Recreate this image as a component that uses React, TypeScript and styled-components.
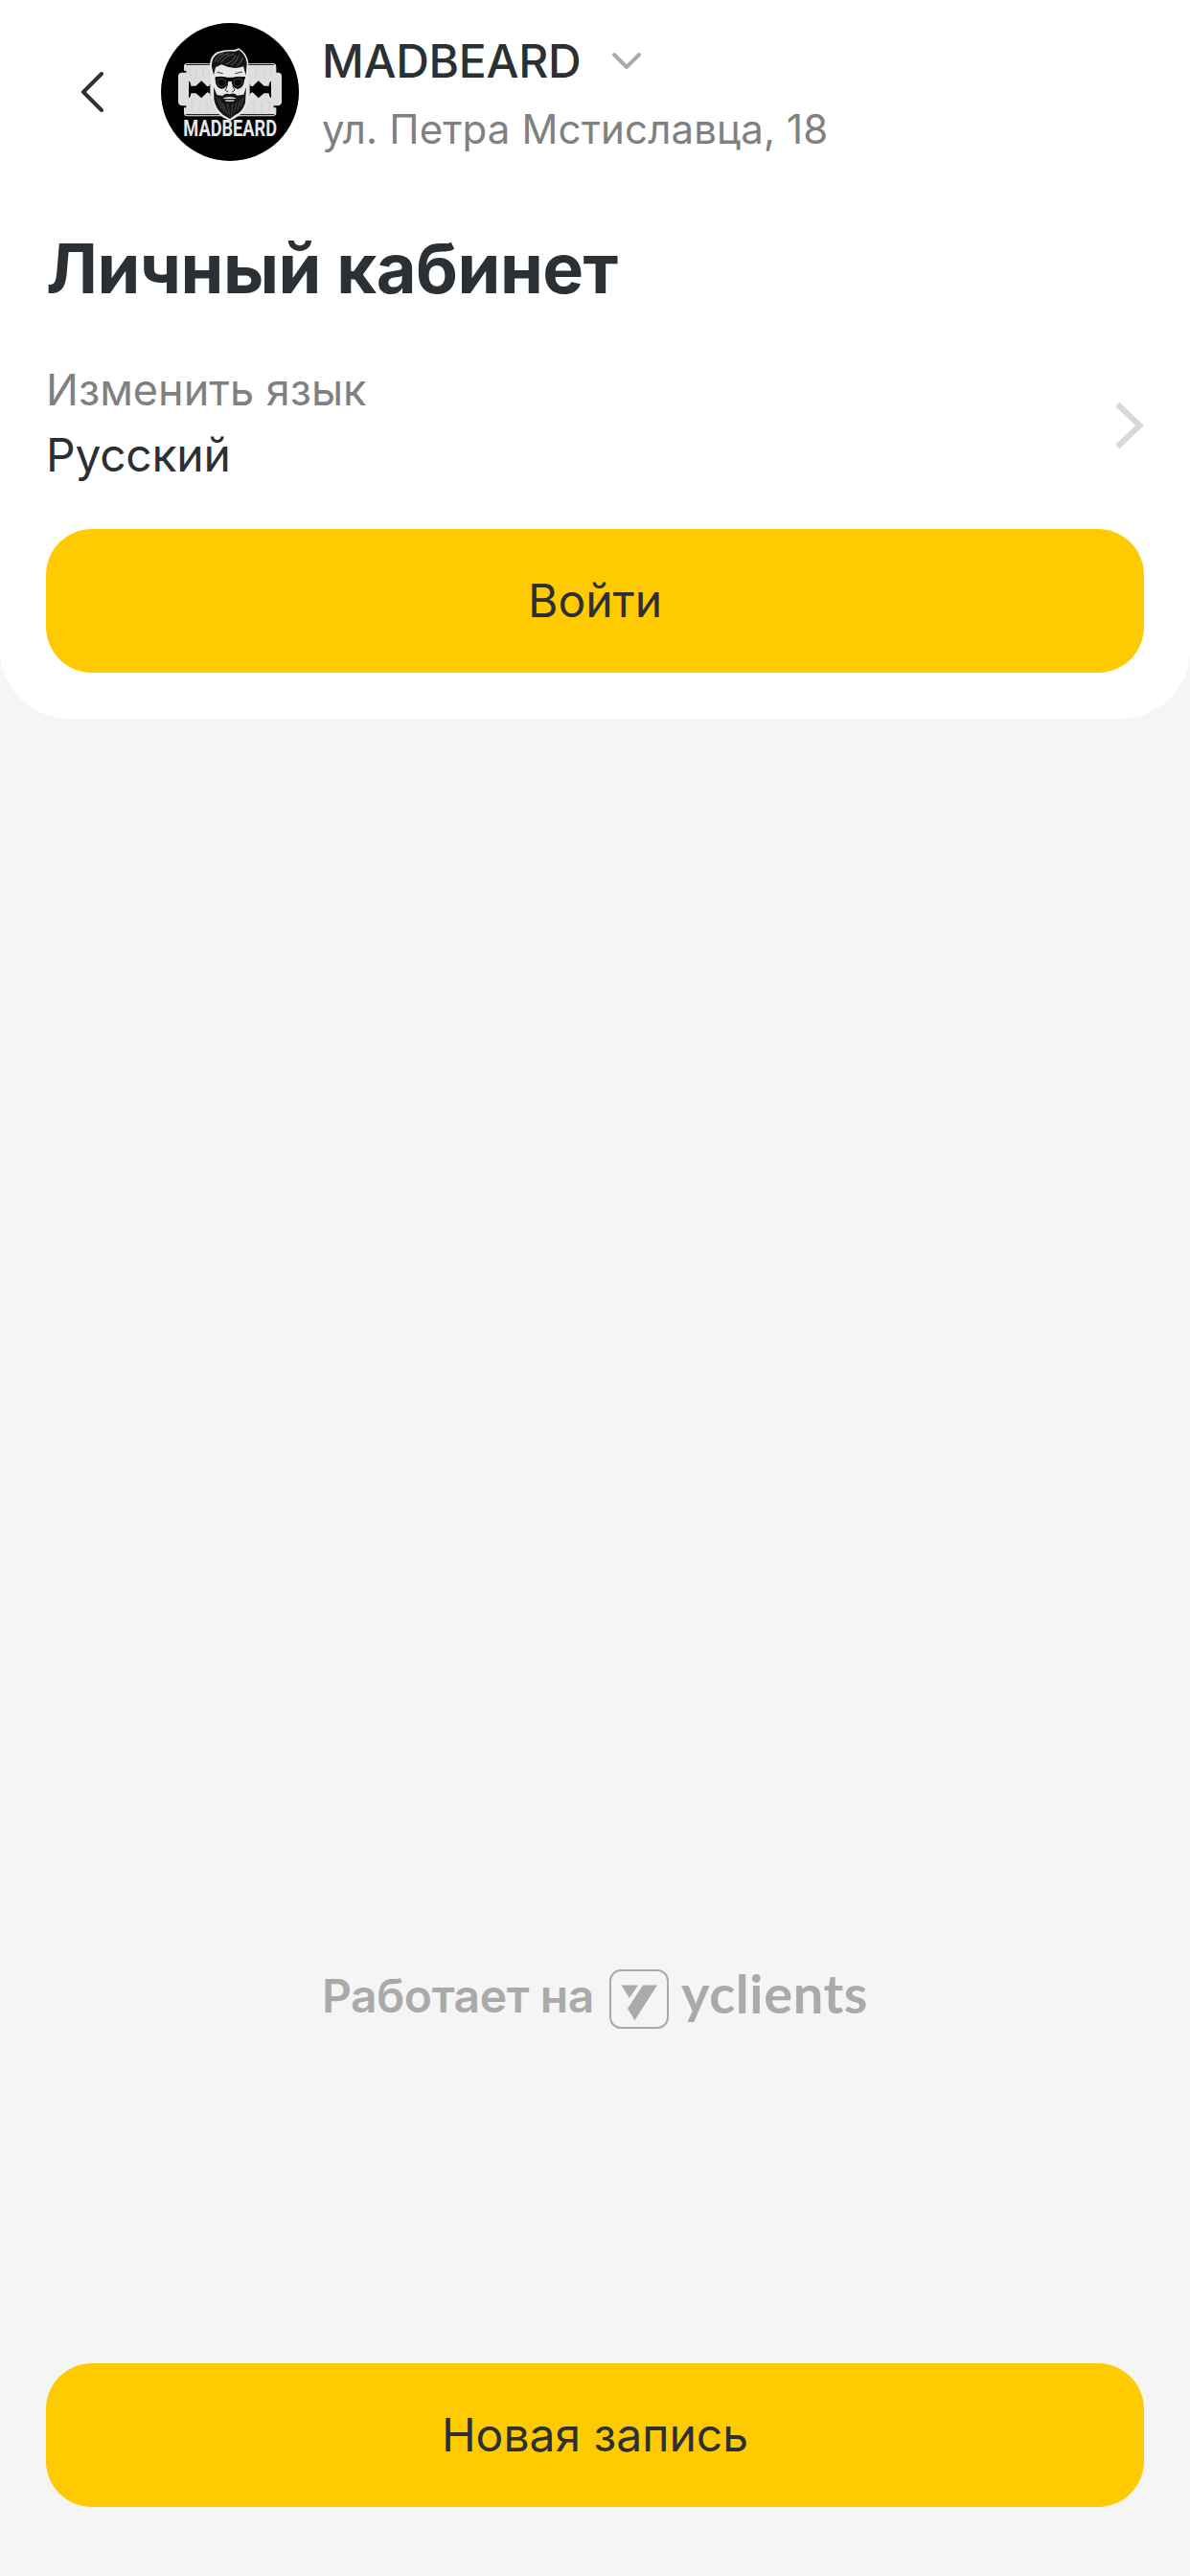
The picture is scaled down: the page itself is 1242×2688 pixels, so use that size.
import React from 'react';
import styled, { createGlobalStyle } from 'styled-components';

const GlobalStyle = createGlobalStyle`
  * {
    box-sizing: border-box;
  }

  body {
    margin: 0;
    background: #f5f5f5;
    color: #2b3034;
    font-family: Inter, 'Liberation Sans', sans-serif;
  }
`;

const Page = styled.div`
  display: flex;
  flex-direction: column;
  width: 100%;
  height: 2688px;
  background: #f5f5f5;
`;

const Card = styled.section`
  height: 750px;
  padding: 24px 48px 48px;
  border-radius: 0 0 72px 72px;
  background: #fff;
`;

const Header = styled.header`
  display: flex;
  align-items: center;
  height: 144px;
`;

const BackButton = styled.button`
  display: flex;
  align-items: center;
  justify-content: center;
  width: 96px;
  height: 96px;
  margin-right: 24px;
  padding: 0;
  border: 0;
  background: none;
`;

const Avatar = styled.svg`
  flex: none;
  width: 144px;
  height: 144px;
  overflow: visible;
`;

const Company = styled.div`
  display: flex;
  flex-direction: column;
  margin-left: 24px;
  padding-top: 7px;
`;

const CompanyName = styled.div`
  display: flex;
  align-items: center;
  gap: 32px;
  height: 71px;
  font-size: 48px;
  font-weight: 500;
  line-height: 71px;
  letter-spacing: -0.3px;
`;

const Address = styled.div`
  height: 72px;
  font-size: 42px;
  line-height: 72px;
  letter-spacing: 0.13px;
  color: #808080;
`;

const Title = styled.h1`
  margin: 64px 0 0;
  font-size: 72px;
  font-weight: 700;
  line-height: 96px;
  letter-spacing: -0.5px;
`;

const LanguageRow = styled.div`
  display: flex;
  align-items: center;
  justify-content: space-between;
  height: 136px;
  margin-top: 48px;
`;

const LanguageText = styled.div`
  margin-bottom: 7px;
`;

const LanguageLabel = styled.div`
  font-size: 45px;
  line-height: 68px;
  color: #808080;
`;

const LanguageValue = styled.div`
  font-size: 48px;
  line-height: 68px;
  letter-spacing: -0.25px;
`;

const ActionButton = styled.button`
  display: block;
  width: 100%;
  height: 150px;
  padding: 0;
  border: 0;
  border-radius: 48px;
  background: #ffcb00;
  color: #2b3034;
  font-family: inherit;
  font-size: 48px;
  line-height: 72px;
`;

const LoginButton = styled(ActionButton)`
  margin-top: 40px;
`;

const PoweredBy = styled.div`
  display: flex;
  align-items: center;
  justify-content: center;
  height: 64px;
  margin-top: auto;
  color: #aaa;
  font-size: 48px;
  font-weight: 600;
  letter-spacing: -0.4px;
`;

const BrandMark = styled.svg`
  width: 62px;
  height: 62px;
  margin: 8px 13px 0 16px;
`;

const Wordmark = styled.span`
  margin-top: -6px;
  font-family: Lato, sans-serif;
  font-size: 56px;
  font-weight: 700;
  letter-spacing: 0.6px;
`;

const Footer = styled.footer`
  padding: 352px 48px 72px;
`;

const MadbeardLogo: React.FC = () => (
  <Avatar viewBox="54 41 432 432" aria-label="MADBEARD">
    <circle cx="270" cy="257" r="216" fill="#000" />
    {/* razor blade */}
    <path
      d="M133 167H408Q415 169 415 177V196H424Q432 198 432 206V290Q430 299 420 300H407V306H415V325Q413 332 405 333H133Q126 331 126 324V306H133V300H119Q108 298 108 288V206Q109 197 120 196H133V190H126V175Q127 168 133 167Z"
      fill="#dedede"
    />
    <path d="M132 171H408M132 328H408" stroke="#000" strokeWidth="3" />
    <path
      d="M141 223Q147 225 148 238H163L181 222 199 240Q207 240 208 230V268Q206 258 199 258L181 276 163 261H148Q147 273 141 275ZM399 223Q393 225 392 238H377L359 222 341 240Q333 240 332 230V268Q334 258 341 258L359 276 377 261H392Q393 273 399 275Z"
      fill="#000"
    />
    <path
      d="M147 178V213M164 188V216M187 179V209M352 180V212M378 190V213M399 180V210M151 286V322M174 294V321M198 285V322M345 289V321M369 291V322M393 284V317"
      stroke="#c8c8c8"
      strokeWidth="2"
    />
    {/* head */}
    <path
      d="M207 179Q205 143 231 132 254 123 284 125L297 120Q323 134 328 166L327 251Q328 282 319 307 304 329 289 337L270 348 247 336Q226 320 219 299 211 270 211 238Z"
      fill="#e8e8e8"
    />
    <path
      d="M213 178Q211 148 234 136 258 127 286 130L298 125Q319 138 323 165L320 205 312 177Q280 189 244 171L225 180 219 204Z"
      fill="#161616"
    />
    <path
      d="M223 162Q230 140 250 136M231 163Q244 140 267 136M243 165Q255 143 282 139M257 170Q278 163 288 143M273 174Q290 164 298 142M293 175Q308 163 310 149"
      fill="none"
      stroke="#858585"
      strokeWidth="2"
    />
    <path
      d="M225 211Q244 208 262 213H278Q298 208 317 211L313 221Q312 244 294 246 278 244 276 222H264Q261 244 244 246 227 243 226 222Z"
      fill="#090909"
      stroke="#000"
      strokeWidth="3"
    />
    <path
      d="M231 219Q244 212 256 220V232Q252 241 243 241 231 239 231 226ZM282 220Q295 212 308 219V230Q304 241 294 241 284 239 282 230Z"
      fill="none"
      stroke="#777"
      strokeWidth="1.5"
    />
    <path
      d="M219 241L229 266 247 269Q257 258 270 264 281 257 293 268L313 265 321 241 318 290Q310 320 285 330L270 341 248 328Q225 309 220 280Z"
      fill="#161616"
    />
    <path d="M249 276Q270 269 290 277L280 286H258Z" fill="#e8e8e8" />
    <path d="M250 280H289" stroke="#111" strokeWidth="4" />
    <path
      d="M228 273L243 309M236 277L254 321M247 293L263 326M262 294L269 331M278 294L275 331M291 290L284 322M303 280L294 313M312 274L304 302"
      fill="none"
      stroke="#5c5c5c"
      strokeWidth="2"
    />
    <path
      d="M230 195L248 199M286 199L309 194M263 233L256 252 265 257M278 238L285 251 276 257"
      fill="none"
      stroke="#333"
      strokeWidth="3"
    />
    <text
      x="124"
      y="395"
      fill="#e6e6e6"
      fontFamily="Roboto, sans-serif"
      fontSize="74"
      fontWeight="700"
      textLength="293"
      lengthAdjust="spacingAndGlyphs"
    >
      MADBEARD
    </text>
  </Avatar>
);

const App: React.FC = () => (
  <>
    <GlobalStyle />
    <Page>
      <Card>
        <Header>
          <BackButton aria-label="Назад">
            <svg width="24" height="42" viewBox="0 0 24 42" fill="none">
              <path d="M22 2L3 21L22 40" stroke="#2b3034" strokeWidth="4" strokeLinecap="round" strokeLinejoin="round" />
            </svg>
          </BackButton>
          <MadbeardLogo />
          <Company>
            <CompanyName>
              MADBEARD
              <svg width="32" height="20" viewBox="0 0 32 20" fill="none">
                <path d="M3 3L16 16L29 3" stroke="#aaa" strokeWidth="4" strokeLinecap="round" strokeLinejoin="round" />
              </svg>
            </CompanyName>
            <Address>ул. Петра Мстиславца, 18</Address>
          </Company>
        </Header>
        <Title>Личный кабинет</Title>
        <LanguageRow>
          <LanguageText>
            <LanguageLabel>Изменить язык</LanguageLabel>
            <LanguageValue>Русский</LanguageValue>
          </LanguageText>
          <svg width="30" height="48" viewBox="0 0 30 48" fill="none">
            <path d="M2.5 2L25.5 24L2.5 46" stroke="#d8d8d8" strokeWidth="6" />
          </svg>
        </LanguageRow>
        <LoginButton>Войти</LoginButton>
      </Card>
      <PoweredBy>
        Работает на
        <BrandMark viewBox="0 0 62 62">
          <rect x="1" y="1" width="60" height="60" rx="11" fill="none" stroke="#aaa" strokeWidth="2" />
          <path d="M12.5 16.5H30L21 30ZM35 16.5H50L26.5 53 19 41Z" fill="#aaa" />
        </BrandMark>
        <Wordmark>yclients</Wordmark>
      </PoweredBy>
      <Footer>
        <ActionButton>Новая запись</ActionButton>
      </Footer>
    </Page>
  </>
);

export default App;
